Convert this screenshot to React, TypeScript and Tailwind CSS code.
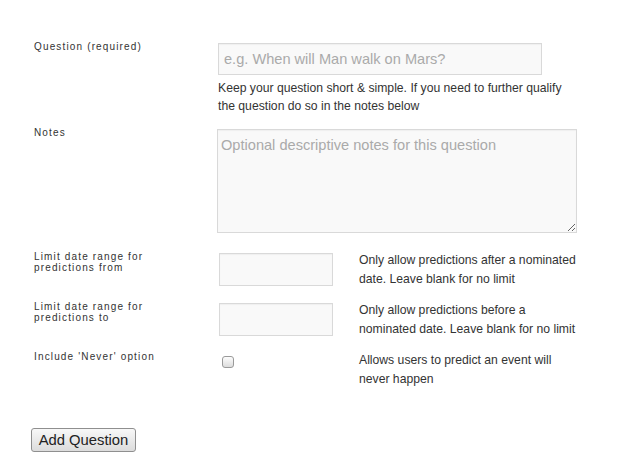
import React from "react";

const labelCls =
  "w-[187px] shrink-0 pl-[3px] mt-[-2px] text-[10px] leading-[11px] tracking-[1.15px] text-[#333]";
const inputCls =
  "border border-[#d9d9d9] bg-[#f9f9f9] shadow-[inset_0_1px_1px_rgba(0,0,0,0.04)] outline-none placeholder:text-[#aaa] text-[#555]";
const helpCls = "text-[12.2px] leading-[19px] text-[#333] whitespace-nowrap";

export default function App() {
  return (
    <div
      className="w-[617px] h-[470px] bg-white pt-[43px] pl-[31px]"
      style={{ fontFamily: '"Liberation Sans", Arial, sans-serif' }}
    >
      {/* Question */}
      <div className="flex items-start">
        <div className={labelCls}>Question (required)</div>
        <div className="flex flex-col">
          <input
            className={`${inputCls} w-[324px] h-[32px] pl-[5px] text-[14.6px]`}
            placeholder="e.g. When will Man walk on Mars?"
          />
          <div className="mt-[4px] text-[12.2px] leading-[18px] text-[#333] whitespace-nowrap">
            Keep your question short &amp; simple. If you need to further qualify
            <br />
            the question do so in the notes below
          </div>
        </div>
      </div>

      {/* Notes */}
      <div className="flex items-start mt-[14px]">
        <div className={labelCls}>Notes</div>
        <textarea
          className={`${inputCls} w-[360px] h-[104px] ml-[-1px] pt-[6px] pl-[3px] text-[14.6px] leading-[18px] resize`}
          placeholder="Optional descriptive notes for this question"
        />
      </div>

      {/* Date from */}
      <div className="flex items-start mt-[20px] h-[50px]">
        <div className={labelCls}>
          Limit date range for
          <br />
          predictions from
        </div>
        <input className={`${inputCls} w-[114px] h-[33px] ml-[1px] px-[5px] text-[14.6px]`} />
        <div className={`${helpCls} ml-[26px] mt-[-2px]`}>
          Only allow predictions after a nominated
          <br />
          date. Leave blank for no limit
        </div>
      </div>

      {/* Date to */}
      <div className="flex items-start h-[50px]">
        <div className={labelCls}>
          Limit date range for
          <br />
          predictions to
        </div>
        <input className={`${inputCls} w-[114px] h-[33px] ml-[1px] px-[5px] text-[14.6px]`} />
        <div className={`${helpCls} ml-[26px] mt-[-2px]`}>
          Only allow predictions before a
          <br />
          nominated date. Leave blank for no limit
        </div>
      </div>

      {/* Never option */}
      <div className="flex items-start h-[50px]">
        <div className={labelCls}>Include 'Never' option</div>
        <div className="w-[141px] shrink-0">
          <input
            type="checkbox"
            className="appearance-none block w-[12px] h-[12px] ml-[4px] mt-[3px] rounded-[3px] border border-[#9a9a9a] bg-gradient-to-b from-[#fdfdfd] to-[#dcdcdc]"
          />
        </div>
        <div className={`${helpCls} mt-[-2px]`}>
          Allows users to predict an event will
          <br />
          never happen
        </div>
      </div>

      <button className="mt-[25px] h-[24px] w-[105px] text-[14.8px] leading-[22px] text-[#222] rounded-[3px] border border-[#8f8f8f] bg-gradient-to-b from-[#f8f8f8] to-[#dcdcdc]">
        Add Question
      </button>
    </div>
  );
}
